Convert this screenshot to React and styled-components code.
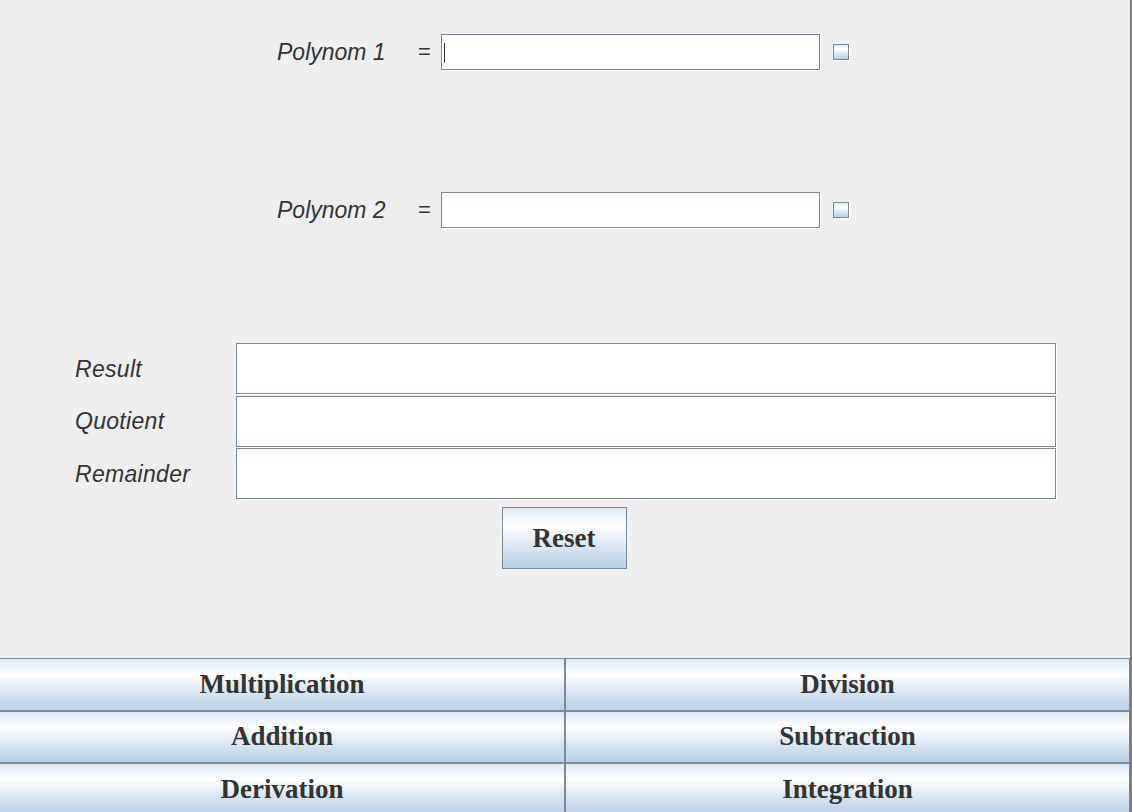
import React from "react";
import styled, { createGlobalStyle } from "styled-components";

const Global = createGlobalStyle`
  html, body { margin: 0; padding: 0; background: #eeeeee; }
  body { font-family: "Liberation Sans", Arial, sans-serif; }
`;

const metalGradient = `linear-gradient(to bottom, #dde8f3 0%, #ffffff 30%, #dde8f3 60%, #b8cfe5 100%)`;

const Frame = styled.div`
  width: 1130px;
  height: 812px;
  background: #eeeeee;
  border-right: 2px solid #7c7c7c;
  overflow: hidden;
  display: flex;
  flex-direction: column;
`;

const PolySection = styled.div`
  display: flex;
  flex-direction: column;
  gap: 122px;
  padding-top: 34px;
`;

const PolyRow = styled.div`
  display: flex;
  align-items: center;
  height: 36px;
  padding-left: 277px;
`;

const Label = styled.span`
  font-family: "Liberation Sans", Arial, sans-serif;
  font-style: italic;
  font-size: 23px;
  letter-spacing: ${(p) => p.$ls || "0"};
  color: #333333;
  white-space: nowrap;
  width: ${(p) => p.$w || "auto"};
  padding-top: 1px;
`;

const Equals = styled.span`
  font-family: "Liberation Sans", Arial, sans-serif;
  font-size: 22px;
  color: #333333;
  width: 23px;
`;

const Field = styled.div`
  position: relative;
  box-sizing: border-box;
  width: ${(p) => p.$w};
  height: ${(p) => p.$h};
  background: #ffffff;
  border: 1px solid #7a8a99;
  box-shadow: 1px 1px 0 #ffffff;
`;

const Caret = styled.span`
  position: absolute;
  left: 2px;
  top: 8px;
  width: 1px;
  height: 20px;
  background: #333333;
`;

const Check = styled.div`
  box-sizing: border-box;
  width: 16px;
  height: 16px;
  margin-left: 13px;
  border: 1px solid #7a8a99;
  background: ${metalGradient};
  box-shadow: 1px 1px 0 #ffffff;
`;

const ResultGrid = styled.div`
  display: grid;
  grid-template-columns: 161px 820px;
  row-gap: 1.5px;
  align-items: center;
  padding-left: 75px;
  margin-top: 115px;
`;

const ResetWrap = styled.div`
  display: flex;
  justify-content: center;
  padding-right: 2px;
  margin-top: 8px;
`;

const MetalButton = styled.button`
  box-sizing: border-box;
  margin: 0;
  padding: 0;
  border: 1px solid #7a8a99;
  background: ${metalGradient};
  font-family: "Liberation Serif", "Times New Roman", serif;
  font-weight: bold;
  font-size: 27px;
  color: #333333;
  cursor: pointer;
  display: flex;
  align-items: center;
  justify-content: center;
`;

const ResetButton = styled(MetalButton)`
  width: 125px;
  height: 62px;
`;

const OpGrid = styled.div`
  display: grid;
  grid-template-columns: 566px 565px;
  grid-auto-rows: 52.5px;
  margin-top: 89px;
  margin-left: -1px;
`;

const OpButton = styled(MetalButton)`
  width: 100%;
  height: 100%;
`;

export default function App() {
  const ops = [
    "Multiplication",
    "Division",
    "Addition",
    "Subtraction",
    "Derivation",
    "Integration",
  ];
  return (
    <>
      <Global />
      <Frame>
        <PolySection>
          <PolyRow>
            <Label $w="141px">Polynom 1</Label>
            <Equals>=</Equals>
            <Field $w="379px" $h="36px">
              <Caret />
            </Field>
            <Check />
          </PolyRow>
          <PolyRow>
            <Label $w="141px">Polynom 2</Label>
            <Equals>=</Equals>
            <Field $w="379px" $h="36px" />
            <Check />
          </PolyRow>
        </PolySection>
        <ResultGrid>
          <Label $ls="0.3px">Result</Label>
          <Field $w="820px" $h="51px" />
          <Label $ls="0.3px">Quotient</Label>
          <Field $w="820px" $h="51px" />
          <Label $ls="0.3px">Remainder</Label>
          <Field $w="820px" $h="51px" />
        </ResultGrid>
        <ResetWrap>
          <ResetButton>Reset</ResetButton>
        </ResetWrap>
        <OpGrid>
          {ops.map((o) => (
            <OpButton key={o}>{o}</OpButton>
          ))}
        </OpGrid>
      </Frame>
    </>
  );
}
